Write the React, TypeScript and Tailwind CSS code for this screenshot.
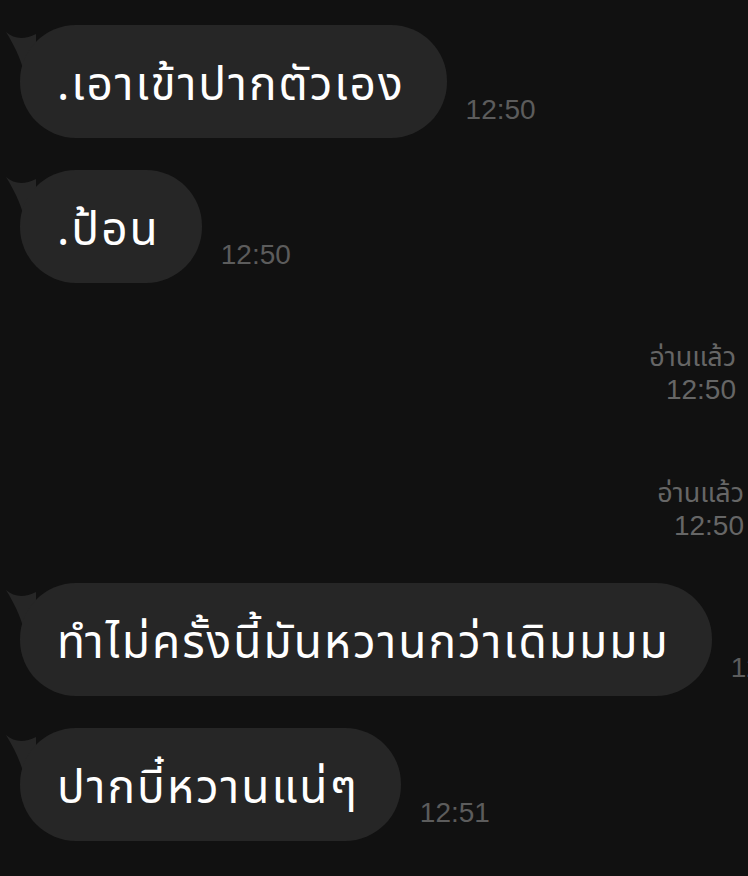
import React from "react";

const thaiFont = { fontFamily: '"Thonburi", "Noto Sans Thai", "Sarabun", "Loma", "Garuda", "Noto Sans", sans-serif' };

function Tail() {
  return (
    <svg
      className="absolute -left-[16px] top-0"
      width="40"
      height="60"
      viewBox="0 0 40 60"
    >
      <path d="M2 7 C10 14 20 15 32 9 L32 50 L20 47 C16 32 10 20 2 7 Z" fill="#262626" />
    </svg>
  );
}

function Incoming({ text, time }: { text: string; time: string }) {
  return (
    <div className="flex items-end pl-[20px]">
      <div className="relative shrink-0">
        <Tail />
        <div
          className="relative h-[113px] rounded-[56px] bg-[#262626] pl-[37px] pr-[42px] pt-[9px] flex items-center text-white text-[46px] tracking-[2px] whitespace-nowrap"
          style={thaiFont}
        >
          {text}
        </div>
      </div>
      <span className="ml-[19px] mb-[14px] text-[28px] leading-[28px] text-[#5c5c5c] whitespace-nowrap font-['Liberation_Sans',sans-serif]">
        {time}
      </span>
    </div>
  );
}

function ReadReceipt({ right }: { right: string }) {
  return (
    <div className={`flex flex-col items-end text-[#666666] ${right}`}>
      <span className="text-[27px] leading-[33px]" style={thaiFont}>
        อ่านแล้ว
      </span>
      <span className="text-[28px] leading-[31px] font-['Liberation_Sans',sans-serif]">12:50</span>
    </div>
  );
}

export default function App() {
  return (
    <div className="w-[748px] h-[876px] bg-[#111111] overflow-hidden flex flex-col pt-[25px]">
      <Incoming text=".เอาเข้าปากตัวเอง" time="12:50" />
      <div className="h-[32px]" />
      <Incoming text=".ป้อน" time="12:50" />
      <div className="h-[58px]" />
      <ReadReceipt right="mr-[12px]" />
      <div className="h-[72px]" />
      <ReadReceipt right="mr-[4px]" />
      <div className="h-[42px]" />
      <Incoming text="ทำไม่ครั้งนี้มันหวานกว่าเดิมมมม" time="12:51" />
      <div className="h-[32px]" />
      <Incoming text="ปากบี๋หวานแน่ๆ" time="12:51" />
    </div>
  );
}
